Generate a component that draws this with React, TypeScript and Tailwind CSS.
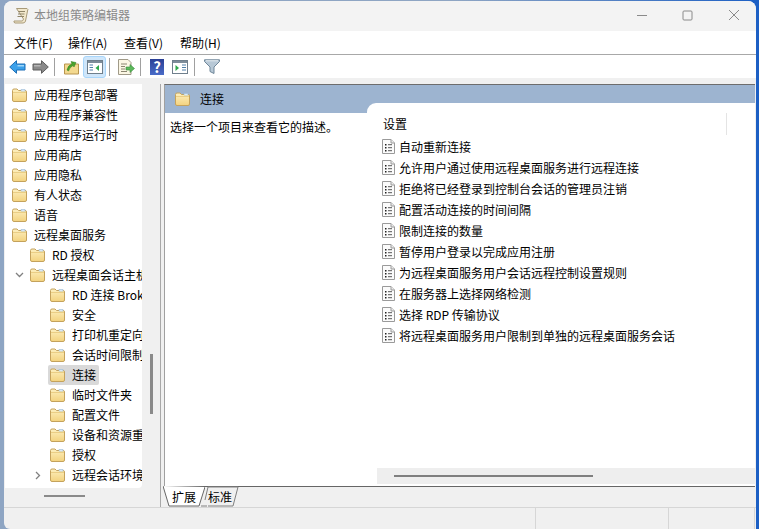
const FONT = { fontFamily: '"Noto Sans CJK SC", "Noto Sans", sans-serif' };

function Folder({ className = "" }: { className?: string }) {
  return (
    <svg width="15" height="14" viewBox="0 0 15 14" className={"shrink-0 " + className}>
      <defs>
        <linearGradient id="folderFill" x1="0" y1="0" x2="0" y2="1">
          <stop offset="0" stopColor="#fdf0c0" />
          <stop offset="1" stopColor="#f3d27e" />
        </linearGradient>
      </defs>
      <path d="M0.5 2.5 Q0.5 1 2 1 H5 L6.5 2.5 H13 Q14.5 2.5 14.5 4 V12 Q14.5 13.5 13 13.5 H2 Q0.5 13.5 0.5 12 Z" fill="url(#folderFill)" stroke="#c4a25c" strokeWidth="1" />
      <path d="M1 4.5 H14" stroke="#e6c67a" strokeWidth="0.8" />
      <path d="M9 1.5 H13 V3 H9 Z" fill="#ffffff" stroke="#8fb4d4" strokeWidth="0.6" />
    </svg>
  );
}

function Row({ level, label, chevron, selected }: { level: 1 | 2 | 3; label: string; chevron?: "down" | "right"; selected?: boolean }) {
  const pad = level === 1 ? "pl-[7px]" : level === 2 ? "pl-[25px]" : "pl-[45px]";
  return (
    <div className={"relative flex h-5 items-center whitespace-nowrap " + pad}>
      {selected && <div className="absolute left-[43px] top-0 h-[20px] w-[51px] rounded-[2px] bg-[#d9d9d9]" />}
      {chevron === "down" && (
        <svg width="9" height="6" viewBox="0 0 9 6" className="absolute left-[10px] top-[7px]">
          <path d="M1 1 L4.5 4.5 L8 1" fill="none" stroke="#808080" strokeWidth="1.3" />
        </svg>
      )}
      {chevron === "right" && (
        <svg width="6" height="9" viewBox="0 0 6 9" className="absolute left-[30px] top-[6px]">
          <path d="M1 1 L4.5 4.5 L1 8" fill="none" stroke="#808080" strokeWidth="1.3" />
        </svg>
      )}
      <Folder className="relative" />
      <span className="relative ml-[7px] text-[12px] leading-5 text-black">{label}</span>
    </div>
  );
}

function Policy({ label }: { label: string }) {
  return (
    <div className="flex h-[21px] items-center whitespace-nowrap pl-[15px]">
      <svg width="13" height="15" viewBox="0 0 13 15" className="shrink-0">
        <path d="M0.5 0.5 H9 L12.5 4 V14.5 H0.5 Z" fill="#fbfbfb" stroke="#9a9a9a" />
        <path d="M9 0.5 V4 H12.5" fill="#ececec" stroke="#9a9a9a" />
        <path d="M3 5 h1.5 v1.5 h-1.5 Z M3 8 h1.5 v1.5 h-1.5 Z M3 11 h1.5 v1.5 h-1.5 Z" fill="#222" />
        <path d="M6 5.7 h4 M6 8.7 h4 M6 11.7 h4" stroke="#555" strokeWidth="1" />
      </svg>
      <span className="ml-[4px] text-[12px] leading-5 text-black">{label}</span>
    </div>
  );
}

function Sep({ className = "" }: { className?: string }) {
  return <div className={"h-[18px] w-px shrink-0 bg-[#a0a0a0] " + className} />;
}

const tree: { level: 1 | 2 | 3; label: string; chevron?: "down" | "right"; selected?: boolean }[] = [
  { level: 1, label: "应用程序包部署" },
  { level: 1, label: "应用程序兼容性" },
  { level: 1, label: "应用程序运行时" },
  { level: 1, label: "应用商店" },
  { level: 1, label: "应用隐私" },
  { level: 1, label: "有人状态" },
  { level: 1, label: "语音" },
  { level: 1, label: "远程桌面服务" },
  { level: 2, label: "RD 授权" },
  { level: 2, label: "远程桌面会话主机", chevron: "down" },
  { level: 3, label: "RD 连接 Broker" },
  { level: 3, label: "安全" },
  { level: 3, label: "打印机重定向" },
  { level: 3, label: "会话时间限制" },
  { level: 3, label: "连接", selected: true },
  { level: 3, label: "临时文件夹" },
  { level: 3, label: "配置文件" },
  { level: 3, label: "设备和资源重定向" },
  { level: 3, label: "授权" },
  { level: 3, label: "远程会话环境", chevron: "right" },
];

const policies = [
  "自动重新连接",
  "允许用户通过使用远程桌面服务进行远程连接",
  "拒绝将已经登录到控制台会话的管理员注销",
  "配置活动连接的时间间隔",
  "限制连接的数量",
  "暂停用户登录以完成应用注册",
  "为远程桌面服务用户会话远程控制设置规则",
  "在服务器上选择网络检测",
  "选择 RDP 传输协议",
  "将远程桌面服务用户限制到单独的远程桌面服务会话",
];

export default function App() {
  return (
    <div style={FONT} className="h-[529px] w-[759px] overflow-hidden bg-[linear-gradient(90deg,#8ea5c3_0%,#8ea5c3_60%,#1c5fc4_100%)] pl-[4px] pr-[3px] pt-px">
      <div className="flex h-[528px] w-[752px] flex-col overflow-hidden rounded-t-[8px] rounded-bl-[6px] bg-[#f0f0f0]">
        {/* Title bar */}
        <div className="flex h-[30px] shrink-0 items-center bg-[#f3f3f3] pb-[2px] pl-[9px]">
          <svg width="16" height="17" viewBox="0 0 16 17" className="shrink-0">
            <path d="M3.5 1.5 H14 Q15.5 2 14.5 4 L12.5 14 Q12 16 10 16 H2 Q0.5 15.5 1 14 H9 Q10 14 10.5 12 Z" fill="#f2e8cc" stroke="#a89a78" />
            <path d="M5.5 4.5 H12 M5 7 H11.5 M4.5 9.5 H11" stroke="#8f8568" strokeWidth="1" />
          </svg>
          <span className="ml-[5px] text-[12px] text-[#8a8a8a]">本地组策略编辑器</span>
          <div className="ml-auto flex items-center">
            <svg width="12" height="12" viewBox="0 0 12 12"><path d="M1 6.5 H11" stroke="#8a8a8a" /></svg>
            <svg width="11" height="11" viewBox="0 0 11 11" className="ml-[34px]"><rect x="1" y="1" width="9" height="9" rx="1" fill="none" stroke="#8a8a8a" /></svg>
            <svg width="12" height="12" viewBox="0 0 12 12" className="ml-[35px] mr-[16px]"><path d="M1 1 L11 11 M11 1 L1 11" stroke="#8a8a8a" /></svg>
          </div>
        </div>
        {/* Menu */}
        <div className="flex h-[24px] shrink-0 items-center border-b border-[#a8a8a8] bg-white pl-[10px] text-[12px] text-black">
          <span className="w-[54px]">文件(F)</span>
          <span className="w-[56px]">操作(A)</span>
          <span className="w-[56px]">查看(V)</span>
          <span>帮助(H)</span>
        </div>
        {/* Toolbar */}
        <div className="flex h-[23px] shrink-0 items-center bg-white pl-[5px]">
          <svg width="17" height="14" viewBox="0 0 17 14" className="shrink-0">
            <path d="M0.7 7 L7.5 0.7 V4 H16 V10 H7.5 V13.3 Z" fill="#3aa0ea" stroke="#1f6fb5" />
            <path d="M8.5 5 H15 V6.5 H8.5 Z" fill="#9fd6f8" />
          </svg>
          <svg width="17" height="14" viewBox="0 0 17 14" className="ml-[6px] shrink-0">
            <path d="M16.3 7 L9.5 0.7 V4 H1 V10 H9.5 V13.3 Z" fill="#8a8a8a" stroke="#5f5f5f" />
            <path d="M2 5 H8.5 V6.5 H2 Z" fill="#b5b5b5" />
          </svg>
          <Sep className="ml-[5px]" />
          <svg width="15" height="16" viewBox="0 0 15 16" className="ml-[9px] shrink-0">
            <path d="M0.5 5 H14.5 V15 H0.5 Z" fill="#f3d98f" stroke="#b8954f" />
            <path d="M3 11 Q4 6 8 5 L7 2.5 L12 3.5 L10 8 L9 6.5 Q6 8 4.5 12 Z" fill="#4aa32c" stroke="#2f7a1c" strokeWidth="0.5" />
          </svg>
          <div className="ml-[4px] flex h-[22px] w-[23px] shrink-0 items-center justify-center rounded-[3px] border border-[#a8d6fb] bg-[#cfe6fa]">
            <svg width="16" height="14" viewBox="0 0 16 14">
              <rect x="0.5" y="0.5" width="15" height="13" fill="#fff" stroke="#6f7f8c" />
              <path d="M1 1 H15 V3 H1 Z" fill="#7d8c99" />
              <path d="M2.5 5 H6 M2.5 7.5 H6 M2.5 10 H6" stroke="#4e7fa8" />
              <path d="M12 5 V11 L8.5 8 Z" fill="#2ea84a" />
            </svg>
          </div>
          <Sep className="ml-[3px]" />
          <svg width="17" height="16" viewBox="0 0 17 16" className="ml-[8px] shrink-0">
            <path d="M0.5 0.5 H10 L13 3.5 V15.5 H0.5 Z" fill="#fbf6e4" stroke="#a09a88" />
            <path d="M3 5 H9 M3 7.5 H7 M3 10 H7 M3 12.5 H9" stroke="#8a8570" />
            <path d="M8 8 H12 V5.5 L16.5 9.5 L12 13.5 V11 H8 Z" fill="#5cb85c" stroke="#3a8f3a" strokeWidth="0.6" />
          </svg>
          <Sep className="ml-[5px]" />
          <div className="ml-[9px] flex h-[16px] w-[14px] shrink-0 items-center justify-center bg-[linear-gradient(180deg,#2a3f95,#4a6cc8)] text-[15px] font-bold leading-4 text-white">?</div>
          <svg width="16" height="14" viewBox="0 0 16 14" className="ml-[8px] shrink-0">
            <rect x="0.5" y="0.5" width="15" height="13" fill="#fff" stroke="#6f7f8c" />
            <path d="M1 1 H15 V3 H1 Z" fill="#7d8c99" />
            <path d="M10 5 H14 M10 7.5 H14 M10 10 H14" stroke="#4e7fa8" />
            <path d="M3.5 5 V11 L7 8 Z" fill="#2ea84a" />
          </svg>
          <Sep className="ml-[6px]" />
          <svg width="16" height="15" viewBox="0 0 16 15" className="ml-[9px] shrink-0">
            <path d="M0.5 0.8 H15.5 V2.5 L10 8 V14.5 L6 12.5 V8 L0.5 2.5 Z" fill="#b7c8d6" stroke="#6f8699" />
            <path d="M2 1.8 H14" stroke="#e8eef3" />
          </svg>
        </div>
        {/* Body */}
        <div className="flex min-h-0 flex-1 flex-col">
          <div className="flex min-h-0 flex-1 pt-[6px]">
            {/* Tree pane */}
            <div className="flex w-[157px] shrink-0 flex-col border-r border-[#a8a8a8]">
              <div className="ml-px flex h-[404px] shrink-0">
                <div className="w-[137px] overflow-hidden rounded-br-[4px] bg-white pt-px">
                  {tree.map((r) => (
                    <Row key={r.label} {...r} />
                  ))}
                </div>
                <div className="flex flex-1 flex-col items-center pt-[270px]">
                  <div className="h-[60px] w-[3px] bg-[#8a8a8a]" />
                </div>
              </div>
              <div className="flex flex-1 items-start pl-[40px] pt-[7px]">
                <div className="h-[2px] w-[41px] bg-[#8a8a8a]" />
              </div>
            </div>
            {/* Right pane */}
            <div className="ml-[3px] mr-px flex min-w-0 flex-1 flex-col">
              <div className="flex min-h-0 flex-1 flex-col border-l border-t border-l-[#a0a0a0] border-t-[#6d6d6d] bg-white">
                <div className="flex h-[28px] shrink-0 items-center bg-[#9db4d0] pl-[10px]">
                  <Folder />
                  <span className="ml-[10px] text-[12px] text-black">连接</span>
                </div>
                <div className="flex min-h-0 flex-1">
                  <div className="w-[202px] shrink-0 pl-[5px] pt-[4px] text-[12px] leading-5 text-black">选择一个项目来查看它的描述。</div>
                  <div className="relative -mt-[10px] flex min-w-0 flex-1 flex-col rounded-tl-[9px] bg-white">
                    <div className="flex h-[32px] shrink-0 items-end pl-[16px]">
                      <span className="pb-[1px] text-[12px] leading-5 text-black">设置</span>
                      <div className="ml-[319px] h-[22px] w-px self-end bg-[#e4e4e4]" />
                    </div>
                    <div className="pt-[1px]">
                      {policies.map((p) => (
                        <Policy key={p} label={p} />
                      ))}
                    </div>
                    <div className="mt-auto ml-[10px] flex h-[16px] items-center bg-[#eeeeee] pl-[17px]">
                      <div className="h-[2px] w-[199px] bg-[#7f7f7f]" />
                    </div>
                    <div className="h-[2px] shrink-0" />
                  </div>
                </div>
              </div>
              {/* Tabs */}
              <div className="-ml-px flex h-[21px] shrink-0 border-t border-[#666]">
                <div className="relative -mt-px flex h-[21px] w-[42px] items-center justify-center text-[12px] text-black">
                  <svg width="42" height="21" viewBox="0 0 42 21" className="absolute inset-0">
                    <path d="M0 0 L6 20 H36 L42 1" fill="#fff" stroke="#666" />
                  </svg>
                  <span className="relative">扩展</span>
                </div>
                <div className="relative -ml-[4px] -mt-px flex h-[21px] w-[38px] items-center justify-center text-[12px] text-black">
                  <svg width="38" height="21" viewBox="0 0 38 21" className="absolute inset-0">
                    <path d="M6 20 L0 20 M4 14 L7 1 H37 L32 20 H7" fill="#f0f0f0" stroke="#808080" />
                  </svg>
                  <span className="relative">标准</span>
                </div>
              </div>
            </div>
          </div>
          {/* Status bar */}
          <div className="flex h-[22px] shrink-0 border-t border-[#d6d6d6]">
            <div className="w-[532px] shrink-0 border-r border-[#d6d6d6]" />
            <div className="w-[133px] shrink-0 border-r border-[#d6d6d6]" />
            <div className="w-[86px] shrink-0 border-r border-[#d6d6d6]" />
          </div>
        </div>
      </div>
    </div>
  );
}
